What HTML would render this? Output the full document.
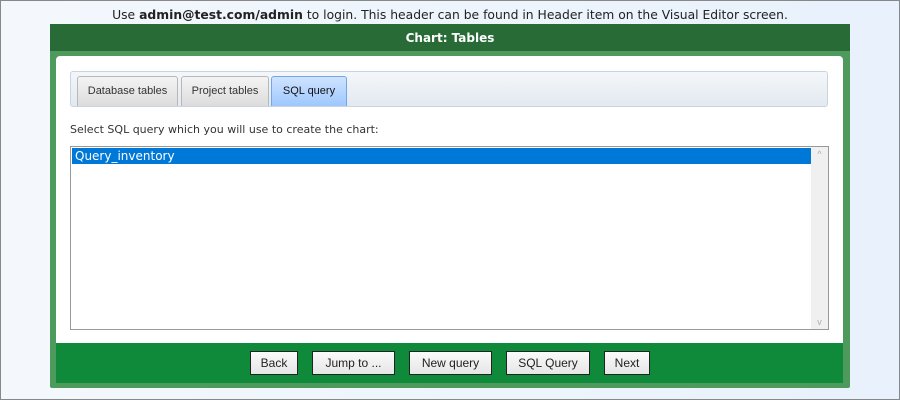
<!DOCTYPE html>
<html><head><meta charset="utf-8"><style>
*{box-sizing:border-box;margin:0;padding:0}
body{width:900px;height:400px;overflow:hidden;font-family:"Liberation Sans",sans-serif;background:linear-gradient(90deg,#f4f8fd,#e8f1fc);position:relative}
.frame{position:absolute;left:0;top:0;width:900px;height:400px;border:1px solid #888;pointer-events:none}
.top{position:absolute;top:8px;left:0;width:900px;text-align:center;font-family:"DejaVu Sans",sans-serif;font-size:12.35px;color:#222}
.panel{position:absolute;left:50px;top:24px;width:800px;height:364px;background:#4e9a5c;border-radius:2px}
.hdr{height:27px;background:#286b37;color:#fff;font-weight:bold;text-align:center;line-height:29px;font-family:"DejaVu Sans",sans-serif;font-size:12px}
.inner{position:absolute;left:6px;top:32px;width:787px;height:327px;background:#fff;border-radius:4px 4px 0 0}
.tabs{position:absolute;left:14px;top:15px;width:758px;height:36px;border:1px solid #c8d4e0;border-radius:3px;background:linear-gradient(#f4f7fa,#e2e9f0)}
.tab{position:absolute;top:4px;height:30px;border:1px solid #b8b8b8;border-bottom:none;border-radius:3px 3px 0 0;background:linear-gradient(#f4f4f4,#dcdcdc);font-size:11px;color:#333;text-align:center;line-height:29px}
.tab.a{background:linear-gradient(#cfe3ff,#9ec8ff);border-color:#6fa8e8;color:#111}
.lbl{position:absolute;left:14px;top:67px;font-family:"DejaVu Sans",sans-serif;font-size:11px;color:#333}
.list{position:absolute;left:14px;top:90px;width:759px;height:184px;border:1px solid #999;background:#fff}
.sel{position:absolute;left:1px;top:1px;width:740px;height:16px;background:#0078d7;color:#fff;font-family:"DejaVu Sans",sans-serif;font-size:12px;line-height:17px;padding-left:3px}
.sb{position:absolute;right:0;top:0;width:17px;height:182px;background:#f0f0f0;color:#aaa;font-size:9px;text-align:center}
.bar{position:absolute;left:6px;top:319px;width:787px;height:40px;background:#0f8a3a}
.btn{position:absolute;top:8px;height:24px;border:1px solid #222;background:linear-gradient(#fafafa,#e6e6e6);font-size:12px;color:#222;text-align:center;line-height:23px;font-family:"Liberation Sans Narrow","Liberation Sans",sans-serif}
</style></head><body>
<div class="top">Use <b>admin@test.com/admin</b> to login. This header can be found in Header item on the Visual Editor screen.</div>
<div class="panel">
<div class="hdr">Chart: Tables</div>
<div class="inner">
<div class="tabs">
<div class="tab" style="left:6px;width:101px">Database tables</div>
<div class="tab" style="left:110px;width:88px">Project tables</div>
<div class="tab a" style="left:200px;width:76px">SQL query</div>
</div>
<div class="lbl">Select SQL query which you will use to create the chart:</div>
<div class="list"><div class="sel">Query_inventory</div><div class="sb"><div style="margin-top:2px">^</div><div style="position:absolute;bottom:2px;width:17px">v</div></div></div>
</div>
<div class="bar">
<div class="btn" style="left:194px;width:48px">Back</div>
<div class="btn" style="left:256px;width:83px">Jump to ...</div>
<div class="btn" style="left:353px;width:83px">New query</div>
<div class="btn" style="left:450px;width:84px">SQL Query</div>
<div class="btn" style="left:548px;width:46px">Next</div>
</div>
</div>
<div class="frame"></div>
</body></html>
